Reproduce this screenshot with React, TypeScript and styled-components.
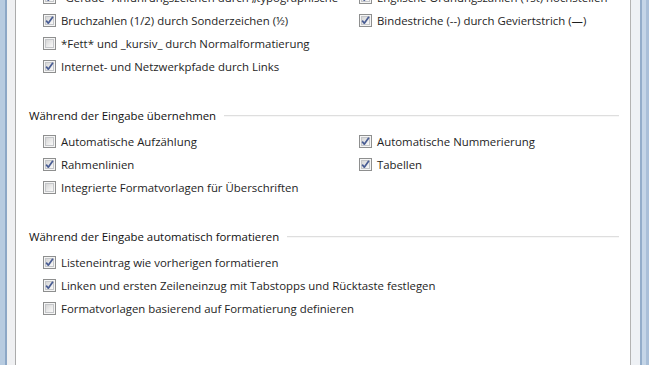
import styled, { createGlobalStyle } from 'styled-components';

const GlobalStyle = createGlobalStyle`
  html, body {
    margin: 0;
    padding: 0;
    background: #ffffff;
    overflow: hidden;
  }
  body {
    font-family: "Open Sans", "Noto Sans", sans-serif;
  }
`;

const Window = styled.div`
  display: flex;
  width: 649px;
  height: 365px;
  overflow: hidden;
`;

const Edge = styled.div<{ $side: 'left' | 'right' }>`
  flex: none;
  width: ${(p) => (p.$side === 'left' ? 16 : 19)}px;
  background: ${(p) =>
    p.$side === 'left'
      ? 'linear-gradient(to right, #b7cbe0 0 5px, #8ca7c6 5px 7px, #eff0f2 7px 15px, #ababab 15px 16px)'
      : 'linear-gradient(to right, #b3b3b3 0 1px, #eef1f5 1px 10px, #93adca 10px 12px, #c4d5e7 12px 16px, #a9bfd8 16px 19px)'};
`;

const Content = styled.div`
  flex: 1;
  display: flex;
  flex-direction: column;
  padding: 0 11px 0 13px;
  color: #1e1e1e;
  font-size: 11.4px;
  font-variant-ligatures: none;
  min-width: 0;
`;

const Section = styled.section<{ $first?: boolean }>`
  display: flex;
  flex-direction: column;
  margin-top: ${(p) => (p.$first ? '-14px' : '29px')};
`;

const Header = styled.div`
  display: flex;
  align-items: center;
  height: 16px;
  gap: 8px;
  margin-bottom: 7px;
  white-space: nowrap;
  color: #111;

  &::after {
    content: '';
    flex: 1;
    height: 1px;
    background: #dedede;
    box-shadow: 0 1px 0 #f7f7f7;
  }
`;

const Grid = styled.div`
  display: grid;
  grid-template-columns: 316px 1fr;
  padding-left: 14px;
`;

const Row = styled.label`
  display: flex;
  align-items: center;
  gap: 5px;
  height: 23px;
  white-space: nowrap;
  min-width: 0;
`;

const Box = styled.span`
  position: relative;
  flex: none;
  width: 13px;
  height: 13px;
  box-sizing: border-box;
  border: 1px solid #8e8f8f;
  background: #f5f5f5;

  &::before {
    content: '';
    position: absolute;
    inset: 1px;
    border: 1px solid #c4c6c9;
    background: linear-gradient(135deg, #d6d6d6 0%, #ececec 60%, #f8f8f8 100%);
  }

  svg {
    position: absolute;
    left: 0;
    top: 0;
  }
`;

type Item = { label: string; checked: boolean } | null;

function CheckBox({ checked }: { checked: boolean }) {
  return (
    <Box>
      {checked && (
        <svg width="11" height="11" viewBox="0 0 11 11">
          <path d="M2.2 5.6 L4.3 8.2 L8.9 1.8" fill="none" stroke="#485c93" strokeWidth="1.7" strokeLinejoin="round" />
        </svg>
      )}
    </Box>
  );
}

const firstRows: Item[] = [
  { label: '"Gerade" Anführungszeichen durch „typographische', checked: true },
  { label: 'Englische Ordnungszahlen (1st) hochstellen', checked: true },
  { label: 'Bruchzahlen (1/2) durch Sonderzeichen (½)', checked: true },
  { label: 'Bindestriche (--) durch Geviertstrich (—)', checked: true },
  { label: '*Fett* und _kursiv_ durch Normalformatierung', checked: false },
  null,
  { label: 'Internet- und Netzwerkpfade durch Links', checked: true },
  null,
];

const applyRows: Item[] = [
  { label: 'Automatische Aufzählung', checked: false },
  { label: 'Automatische Nummerierung', checked: true },
  { label: 'Rahmenlinien', checked: true },
  { label: 'Tabellen', checked: true },
  { label: 'Integrierte Formatvorlagen für Überschriften', checked: false },
  null,
];

const formatRows: Item[] = [
  { label: 'Listeneintrag wie vorherigen formatieren', checked: true },
  null,
  { label: 'Linken und ersten Zeileneinzug mit Tabstopps und Rücktaste festlegen', checked: true },
  null,
  { label: 'Formatvorlagen basierend auf Formatierung definieren', checked: false },
  null,
];

function Items({ rows }: { rows: Item[] }) {
  return (
    <Grid>
      {rows.map((item, index) =>
        item ? (
          <Row key={index}>
            <CheckBox checked={item.checked} />
            <span>{item.label}</span>
          </Row>
        ) : (
          <span key={index} />
        )
      )}
    </Grid>
  );
}

export default function App() {
  return (
    <>
      <GlobalStyle />
      <Window>
        <Edge $side="left" />
        <Content>
          <Section $first>
            <Items rows={firstRows} />
          </Section>
          <Section>
            <Header>Während der Eingabe übernehmen</Header>
            <Items rows={applyRows} />
          </Section>
          <Section>
            <Header>Während der Eingabe automatisch formatieren</Header>
            <Items rows={formatRows} />
          </Section>
        </Content>
        <Edge $side="right" />
      </Window>
    </>
  );
}
